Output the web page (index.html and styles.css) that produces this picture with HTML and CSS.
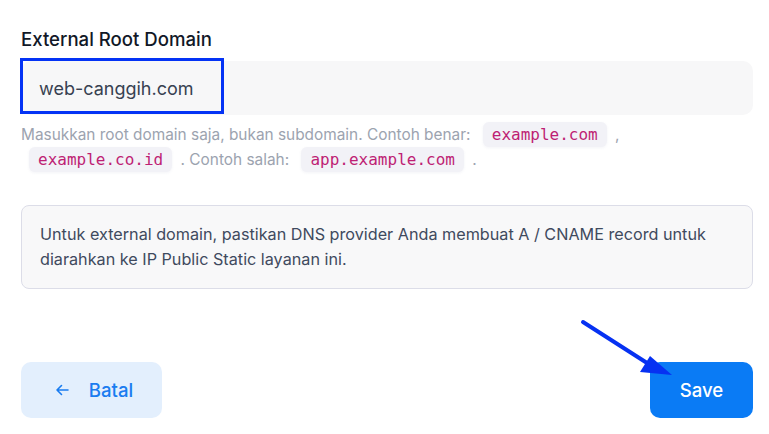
FILE: index.html
```html
<!DOCTYPE html>
<html lang="en">
  <head>
    <meta charset="UTF-8" />
    <meta name="viewport" content="width=device-width, initial-scale=1.0" />
    <title>External Root Domain</title>
    <link rel="stylesheet" href="styles.css">
  </head>
  <body>
    <form class="domain-form">
      <div class="field">
        <label class="field-label" for="rootDomain">External Root Domain</label>
        <div class="input-wrap">
          <input id="rootDomain" class="field-input" type="text" value="web-canggih.com" />
          <div class="input-highlight"></div>
        </div>
        <p class="field-help">
          Masukkan root domain saja, bukan subdomain. Contoh benar:
          <code>example.com</code> ,
          <code>example.co.id</code> . Contoh salah:
          <code>app.example.com</code> .
        </p>
      </div>

      <div class="info-box">
        Untuk external domain, pastikan DNS provider Anda membuat A / CNAME record untuk
        diarahkan ke IP Public Static layanan ini.
      </div>

      <div class="form-actions">
        <button type="button" class="btn btn-back">
          <svg width="16" height="16" viewBox="0 0 16 16" fill="none" stroke="currentColor" stroke-width="1.6" stroke-linecap="round" stroke-linejoin="round">
            <path d="M14 8H3M7.5 3.5L3 8l4.5 4.5" />
          </svg>
          <span>Batal</span>
        </button>
        <button type="submit" class="btn btn-save">Save</button>
      </div>

      <!-- pointer toward the save button -->
      <svg class="save-pointer" width="100" height="70" viewBox="0 0 100 70">
        <line x1="3" y1="2" x2="78" y2="50" stroke="#0631f2" stroke-width="4" stroke-linecap="round" />
        <polygon points="70,36 60,52 92,55" fill="#0631f2" />
      </svg>
    </form>
  </body>
</html>
```

FILE: styles.css
```css
* {
  margin: 0;
  padding: 0;
  box-sizing: border-box;
}

body {
  font-family: Inter, "Noto Sans", sans-serif;
  background: white;
  color: #1f2937;
}

.domain-form {
  position: relative;
  width: 732px;
  margin-left: 21px;
  padding-top: 27px;
}

.field-label {
  display: block;
  font-size: 18.6px;
  font-weight: 500;
  color: #111827;
  line-height: 24px;
  margin-bottom: 10px;
}

.input-wrap {
  position: relative;
}

.field-input {
  width: 100%;
  height: 54px;
  border: none;
  border-radius: 10px;
  background: #f7f7f8;
  padding: 0 18px;
  font-family: inherit;
  font-size: 18px;
  color: #374151;
  outline: none;
}

.input-highlight {
  position: absolute;
  left: -1px;
  top: -3px;
  width: 204px;
  height: 56px;
  border: 3.5px solid #0433f5;
  pointer-events: none;
}

.field-help {
  margin-top: 7px;
  font-size: 15.4px;
  line-height: 25px;
  color: #9ca3af;
}

.field-help code {
  display: inline-block;
  font-family: "DejaVu Sans Mono", monospace;
  font-size: 16px;
  line-height: 25px;
  color: #be1f74;
  background: #f2f2f7;
  border-radius: 6px;
  padding: 0 9px;
  margin: 0 4px 0 8px;
  box-shadow: 0 1px 3px rgba(100, 110, 150, 0.08);
}

.info-box {
  margin-top: 33px;
  background: #f8f8f9;
  border: 1px solid #dcdde8;
  border-radius: 8px;
  padding: 16px 18px;
  font-size: 16.2px;
  line-height: 25px;
  color: #3f4a5e;
}

.form-actions {
  display: flex;
  justify-content: space-between;
  margin-top: 73px;
}

.btn {
  height: 56px;
  border: none;
  border-radius: 10px;
  font-family: inherit;
  font-size: 18.6px;
  font-weight: 500;
  cursor: pointer;
  display: inline-flex;
  align-items: center;
  justify-content: center;
}

.btn-back {
  width: 141px;
  background: #e3effd;
  color: #1a7cf0;
  gap: 19px;
  padding-left: 4px;
}

.btn-save {
  width: 103px;
  background: #0a7bf5;
  color: white;
}

.save-pointer {
  position: absolute;
  left: 559px;
  top: 320px;
  overflow: visible;
}
```
